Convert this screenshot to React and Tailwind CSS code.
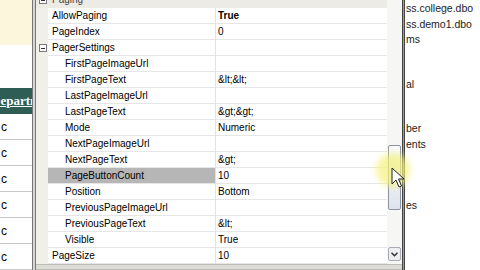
import React from "react";

const rows = [
  { name: "AllowPaging", value: "True", bold: true },
  { name: "PageIndex", value: "0" },
  { name: "PagerSettings", value: "", group: true },
  { name: "FirstPageImageUrl", value: "", sub: true },
  { name: "FirstPageText", value: "&lt;&lt;", sub: true },
  { name: "LastPageImageUrl", value: "", sub: true },
  { name: "LastPageText", value: "&gt;&gt;", sub: true },
  { name: "Mode", value: "Numeric", sub: true },
  { name: "NextPageImageUrl", value: "", sub: true },
  { name: "NextPageText", value: "&gt;", sub: true },
  { name: "PageButtonCount", value: "10", sub: true, selected: true },
  { name: "Position", value: "Bottom", sub: true },
  { name: "PreviousPageImageUrl", value: "", sub: true },
  { name: "PreviousPageText", value: "&lt;", sub: true },
  { name: "Visible", value: "True", sub: true },
  { name: "PageSize", value: "10" },
];

const rightItems = [
  { text: "ss.college.dbo", top: 0 },
  { text: "ss.demo1.dbo", top: 16 },
  { text: "ms", top: 31 },
  { text: "al", top: 76 },
  { text: "ber", top: 120 },
  { text: "ents", top: 136 },
  { text: "es", top: 197 },
];

const MinusBox = () => (
  <div className="w-[8px] h-[8px] border border-[#7b7b7b] bg-white flex items-center justify-center">
    <div className="w-[4px] h-px bg-[#333]"></div>
  </div>
);

const App = () => {
  return (
    <div
      className="w-[480px] h-[270px] flex overflow-hidden relative bg-white text-black"
      style={{ fontFamily: '"Liberation Sans", Arial, sans-serif' }}
    >
      {/* left page preview */}
      <div className="w-[32px] flex flex-col shrink-0 overflow-hidden">
        <div className="h-[45px] bg-[#fbf6dc]"></div>
        <div className="h-[44px] bg-white"></div>
        <div className="h-[26px] bg-[#2e5d55] flex items-center overflow-hidden">
          <span className="ml-[-9px] text-[13px] font-bold text-white underline whitespace-nowrap" style={{ fontFamily: '"Liberation Serif", serif' }}>
            Department
          </span>
        </div>
        {[0, 1, 2, 3, 4, 5].map((i) => (
          <div key={i} className="h-[26px] shrink-0 border-b border-[#c8c8c8] flex items-center text-[12px] pl-[1px]">
            c
          </div>
        ))}
      </div>
      <div className="w-[4px] shrink-0 bg-[#d6d6d6] border-l border-[#777] border-r border-[#9c9c9c]"></div>

      {/* property grid */}
      <div className="w-[366px] shrink-0 flex flex-col">
        <div className="h-[264px] flex overflow-hidden">
          <div className="w-[351px] flex flex-col text-[10px] leading-[16px]">
            <div className="mt-[-8px] h-[16px] bg-[#ecebe5] flex items-center shrink-0">
              <div className="w-[12px] flex justify-center pl-[2px]">
                <MinusBox />
              </div>
              <span className="ml-[4px] text-[#444]">Paging</span>
            </div>
            {rows.map((r) => (
              <div key={r.name} className="h-[16px] flex shrink-0">
                <div className="w-[12px] bg-[#f0efea] flex items-center justify-center pl-[2px]">
                  {r.group && <MinusBox />}
                </div>
                <div
                  className={`w-[167px] border-b border-[#e6e6e6] whitespace-nowrap overflow-hidden ${
                    r.sub ? "pl-[17px]" : "pl-[4px]"
                  } ${r.selected ? "bg-[#b6b6b6]" : ""}`}
                >
                  {r.name}
                </div>
                <div className="w-px bg-[#e2e2e2]"></div>
                <div className={`flex-1 border-b border-[#e6e6e6] pl-[2px] ${r.bold ? "font-bold" : ""}`}>
                  {r.value}
                </div>
              </div>
            ))}
          </div>
          {/* scrollbar */}
          <div className="w-[15px] bg-[#f6f6f4] flex flex-col items-center pt-[145px]">
            <div className="w-[13px] h-[65px] rounded-[2px] border border-[#8d93a0] bg-gradient-to-b from-[#fbfbfd] to-[#dfe3ec]"></div>
            <div className="mt-[37px] w-[13px] h-[14px] rounded-[2px] border border-[#a7abb3] bg-[#eceef2] flex items-center justify-center">
              <svg width="7" height="5" viewBox="0 0 7 5">
                <path d="M0.5 0.8 L3.5 3.8 L6.5 0.8" fill="none" stroke="#333" strokeWidth="1.5" />
              </svg>
            </div>
          </div>
        </div>
        <div className="flex-1 border-t border-[#9a9a9a] bg-[#dcdcd6] border-b border-[#bdbdb5]"></div>
      </div>

      {/* right panel */}
      <div className="w-[3px] shrink-0 bg-[#9b9b9b] border-l border-[#333] border-r border-[#444]"></div>
      <div className="flex-1 relative overflow-hidden text-[10.5px] leading-[16px] text-[#222]">
        {rightItems.map((it) => (
          <div key={it.text} className="absolute left-[1px] whitespace-nowrap" style={{ top: it.top }}>
            {it.text}
          </div>
        ))}
      </div>

      {/* cursor highlight */}
      <div className="absolute left-[376px] top-[153px] w-[34px] h-[34px] rounded-full bg-[#f4f27a] opacity-70 blur-[3px]"></div>
      <svg className="absolute left-[391px] top-[167px]" width="14" height="22" viewBox="0 0 14 22">
        <path d="M1 1 L1 17 L5 13 L8 20 L10.5 19 L7.5 12 L13 12 Z" fill="white" stroke="#222" strokeWidth="1" />
      </svg>
    </div>
  );
};

export default App;
